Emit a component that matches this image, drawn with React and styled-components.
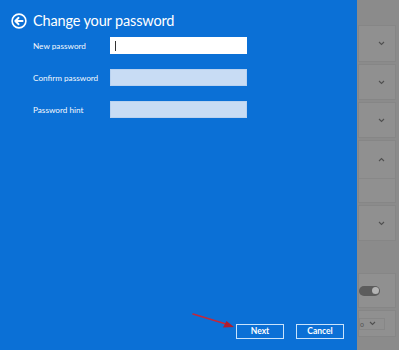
import React from 'react'
import styled, { createGlobalStyle } from 'styled-components'

const Global = createGlobalStyle`
  html, body { margin:0; padding:0; }
  body { width:399px; height:350px; overflow:hidden; font-family:Lato, "Open Sans", sans-serif; }
`

const Page = styled.div`
  display:flex;
  width:399px;
  height:350px;
  background-color:#8b8b8b;
`
const Panel = styled.div`
  position:relative;
  width:357px;
  flex-shrink:0;
  background-color:#0b70d6;
  display:flex;
  flex-direction:column;
  box-sizing:border-box;
  padding:12px 13px 11px 0;
  color:#fff;
`
const Header = styled.div`
  display:flex;
  align-items:center;
  gap:6px;
  padding-left:11px;
  height:18px;
`
const Title = styled.h1`
  margin:0;
  font-size:14.5px;
  font-weight:400;
  letter-spacing:-0.15px;
  line-height:18px;
`
const Form = styled.div`
  display:grid;
  grid-template-columns:77px 137px;
  grid-auto-rows:17px;
  row-gap:15px;
  margin-top:7px;
  padding-left:33px;
  align-items:center;
`
const Label = styled.label`
  font-size:8.2px;
  font-weight:400;
  color:#f4f8fd;
  padding-top:1px;
`
const Field = styled.div`
  height:17px;
  box-sizing:border-box;
  background-color:${p => p.$active ? '#ffffff' : '#c8dcf4'};
  border:1px solid ${p => p.$active ? '#ffffff' : '#b9d2f0'};
  display:flex;
  align-items:center;
  padding-left:4px;
`
const Caret = styled.span`
  width:1px;
  height:10px;
  background-color:#333;
`
const Footer = styled.div`
  margin-top:auto;
  display:flex;
  justify-content:flex-end;
  gap:12px;
`
const Button = styled.button`
  width:48px;
  height:15px;
  box-sizing:border-box;
  padding:0;
  background:transparent;
  border:1.5px solid #c9e3fb;
  color:#fff;
  font-family:inherit;
  font-size:8.5px;
  font-weight:700;
  line-height:11px;
`
const Arrow = styled.svg`
  position:absolute;
  left:190px;
  top:311px;
`

const Side = styled.div`
  flex:1;
  display:flex;
  flex-direction:column;
  gap:2px;
  padding:25px 11px 0 1px;
`
const Card = styled.div`
  height:${p => p.$h}px;
  margin-top:${p => p.$mt || 0}px;
  background-color:#909090;
  border:1px solid #868686;
  box-sizing:border-box;
  display:flex;
  flex-direction:column;
`
const CardRow = styled.div`
  height:${p => p.$h}px;
  display:flex;
  align-items:center;
  justify-content:flex-end;
  padding-right:10px;
  border-bottom:${p => p.$line ? '1px solid #888' : 'none'};
`
const Toggle = styled.div`
  width:21px;
  height:10px;
  border-radius:5px;
  background-color:#5c5c5c;
  display:flex;
  align-items:center;
  justify-content:flex-end;
  padding-right:1px;
  box-sizing:border-box;
  margin-right:auto;
`
const Knob = styled.span`
  width:7px;
  height:7px;
  border-radius:50%;
  background-color:#b4b4b4;
`
const Drop = styled.div`
  height:12px;
  width:26px;
  box-sizing:border-box;
  border:1px solid #878787;
  display:flex;
  align-items:center;
  gap:5px;
  font-size:7px;
  color:#555;
  margin-right:auto;
`

const Chevron = ({ up }) => (
  <svg width="7" height="5" viewBox="0 0 7 5">
    <path d={up ? 'M1 4 L3.5 1.5 L6 4' : 'M1 1 L3.5 3.5 L6 1'} fill="none" stroke="#505050" strokeWidth="1.1" />
  </svg>
)

const BackIcon = () => (
  <svg width="16" height="16" viewBox="0 0 16 16">
    <circle cx="8" cy="8" r="6.9" fill="none" stroke="#fff" strokeWidth="1.6" />
    <path d="M4.3 8 L7.6 4.8 M4.3 8 L7.6 11.2 M4.3 8 H11.6" fill="none" stroke="#fff" strokeWidth="1.9" strokeLinecap="round" />
  </svg>
)

const fields = [
  { label: 'New password', active: true },
  { label: 'Confirm password' },
  { label: 'Password hint' },
]

export default function App() {
  return (
    <Page>
      <Global />
      <Panel>
        <Header>
          <BackIcon />
          <Title>Change your password</Title>
        </Header>
        <Form>
          {fields.map(f => (
            <React.Fragment key={f.label}>
              <Label>{f.label}</Label>
              <Field $active={f.active}>{f.active && <Caret />}</Field>
            </React.Fragment>
          ))}
        </Form>
        <Footer>
          <Button>Next</Button>
          <Button>Cancel</Button>
        </Footer>
        <Arrow width="50" height="22" viewBox="0 0 50 22">
          <path d="M3 3 L36 13" stroke="#c4283a" strokeWidth="1.6" strokeLinecap="round" />
          <path d="M44 16 L33 16.5 L36.5 10 Z" fill="#b01d2e" />
        </Arrow>
      </Panel>
      <Side>
        <Card $h={37}><CardRow $h={35}><Chevron /></CardRow></Card>
        <Card $h={36}><CardRow $h={34}><Chevron /></CardRow></Card>
        <Card $h={36}><CardRow $h={34}><Chevron /></CardRow></Card>
        <Card $h={63}>
          <CardRow $h={38} $line><Chevron up /></CardRow>
          <CardRow $h={23} />
        </Card>
        <Card $h={36}><CardRow $h={34}><Chevron /></CardRow></Card>
        <Card $h={35} $mt={30}><CardRow $h={33}><Toggle><Knob /></Toggle></CardRow></Card>
        <Card $h={27}><CardRow $h={25}><Drop>o <Chevron /></Drop></CardRow></Card>
      </Side>
    </Page>
  )
}
